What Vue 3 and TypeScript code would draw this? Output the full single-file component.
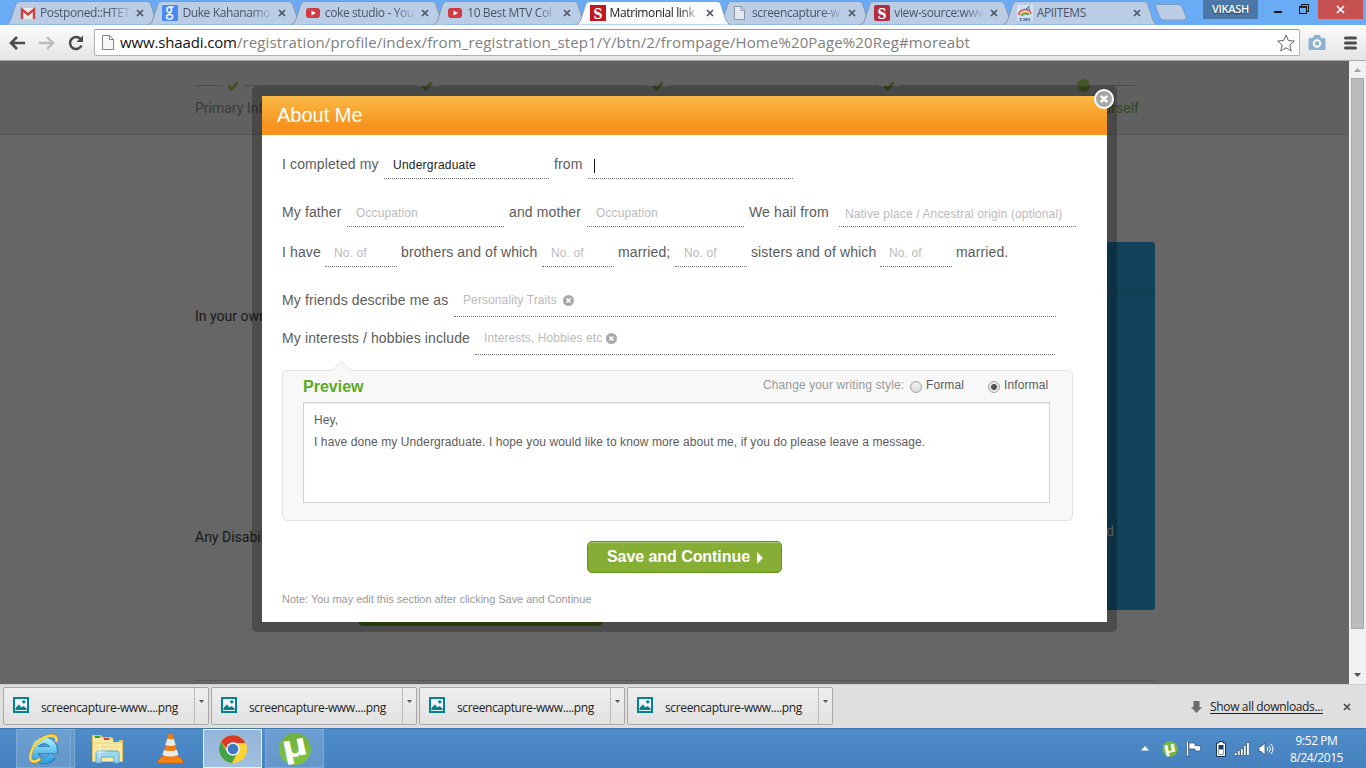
<script setup lang="ts">
interface Tab { icon: 'gmail' | 'google' | 'youtube' | 'shaadi' | 'doc' | 'apiit'; title: string; active?: boolean; fade?: boolean }
interface Piece { label: string; labelWidth: number; field?: number; gap?: number; text?: string; kind?: 'filled' | 'caret' | 'hint' | 'low' }

const tabs: Tab[] = [
  { icon: 'gmail', title: 'Postponed::HTET', fade: true },
  { icon: 'google', title: 'Duke Kahanamo', fade: true },
  { icon: 'youtube', title: 'coke studio - You', fade: true },
  { icon: 'youtube', title: '10 Best MTV Col', fade: true },
  { icon: 'shaadi', title: 'Matrimonial link', active: true, fade: true },
  { icon: 'doc', title: 'screencapture-w', fade: true },
  { icon: 'shaadi', title: 'view-source:www', fade: true },
  { icon: 'apiit', title: 'APIITEMS' },
]

const rows: Piece[][] = [
  [
    { label: 'I completed my', labelWidth: 102, field: 165, gap: 5, text: 'Undergraduate', kind: 'filled' },
    { label: 'from', labelWidth: 34, field: 205, text: '', kind: 'caret' },
  ],
  [
    { label: 'My father', labelWidth: 65, field: 157, gap: 5, text: 'Occupation', kind: 'hint' },
    { label: 'and mother', labelWidth: 78, field: 157, gap: 5, text: 'Occupation', kind: 'hint' },
    { label: 'We hail from', labelWidth: 90, field: 237, text: 'Native place / Ancestral origin (optional)', kind: 'low' },
  ],
  [
    { label: 'I have', labelWidth: 43, field: 72, gap: 4, text: 'No. of', kind: 'hint' },
    { label: 'brothers and of which', labelWidth: 141, field: 72, gap: 4, text: 'No. of', kind: 'hint' },
    { label: 'married;', labelWidth: 57, field: 72, gap: 4, text: 'No. of', kind: 'hint' },
    { label: 'sisters and of which', labelWidth: 129, field: 72, gap: 4, text: 'No. of', kind: 'hint' },
    { label: 'married.', labelWidth: 60 },
  ],
]

const tagRows = [
  { label: 'My friends describe me as', labelWidth: 172, field: 602, text: 'Personality Traits', gap: 6 },
  { label: 'My interests / hobbies include', labelWidth: 193, field: 580, text: 'Interests, Hobbies etc', gap: 4 },
]

const steps = [27, 172, 209, 209, 172]
const downloads = [1, 2, 3, 4]
</script>

<template>
  <div class="screen">
    <header class="tabstrip">
      <div class="tabs">
        <div v-for="(tab, i) in tabs" :key="i" class="tab" :class="{ active: tab.active }">
          <svg class="tab-shape" width="156" height="25" viewBox="0 0 156 25">
            <path d="M-1 24.5C2 24 3 22 4 19L8.500 5C9.500 2.300 11 1.500 14 1.500H139C142 1.500 143 2.300 144 5L148.500 19C150 22.500 151 24 154 24.500" />
          </svg>
          <span class="favicon">
            <svg v-if="tab.icon === 'gmail'" width="16" height="16"><path d="M1 3h14v11H1z" fill="#e9e9ee" /><path d="M2 14V4.500L8 9.500L14 4.500V14" fill="none" stroke="#c9423e" stroke-width="2.400" /></svg>
            <svg v-else-if="tab.icon === 'google'" width="16" height="16"><rect width="16" height="16" rx="1" fill="#4a8af4" /><g fill="none" stroke="#fff"><ellipse cx="7.300" cy="4.800" rx="2.300" ry="2.600" stroke-width="1.500" /><path d="M7.500 2h4M9 7q-2.500 1.500-.5 2.500" stroke-width="1.300" /><ellipse cx="7.600" cy="11.800" rx="3.100" ry="2.300" stroke-width="1.400" /></g></svg>
            <svg v-else-if="tab.icon === 'youtube'" width="16" height="16"><rect x="1" y="3" width="14" height="10" rx="3" fill="#cf3a44" /><path d="M6.500 5.500v5L11 8z" fill="#fff" /></svg>
            <svg v-else-if="tab.icon === 'shaadi'" width="16" height="16"><rect width="16" height="16" :rx="tab.active ? 0 : 2" :fill="tab.active ? '#c4161c' : '#b52c42'" /><text x="8" y="13.500" text-anchor="middle" font-family="DejaVu Serif, serif" font-weight="bold" font-size="15" textLength="9" lengthAdjust="spacingAndGlyphs" fill="#fff">S</text></svg>
            <svg v-else-if="tab.icon === 'doc'" width="16" height="16"><path d="M2.500 1.500h7l3 3.500v9.500h-10z" fill="#e3e9f2" stroke="#8b95a3" /><path d="M9 1.500V5.500h3.500" fill="none" stroke="#8b95a3" /></svg>
            <svg v-else width="16" height="16"><rect width="16" height="16" fill="#d3e2ef" /><path d="M2 10a6 5 0 0 1 12-1" fill="none" stroke="#db4a48" stroke-width="1.500" /><path d="M3.500 10.500a5 4 0 0 1 9-1" fill="none" stroke="#e7ae33" stroke-width="1.500" /><path d="M5 11a4 3 0 0 1 6.500-1.500" fill="none" stroke="#3c9757" stroke-width="1.500" /><path d="M9 4l4-3M11 2l2 3" stroke="#406a9a" /><text x="8" y="15.500" text-anchor="middle" font-family="Liberation Serif, serif" font-size="5" font-weight="bold" fill="#253f78">EMS</text></svg>
          </span>
          <span class="tab-title" :class="{ fade: tab.fade }">{{ tab.title }}</span>
          <svg class="tab-close" width="8" height="8" viewBox="0 0 8 8"><path d="M1 1l6 6M7 1L1 7" /></svg>
        </div>
      </div>
      <svg class="newtab" width="32" height="17"><path d="M1 .5h22q3 0 4 2.500l4 10q1 3-2 3H9q-3 0-4-2.500L.7 2.500Q.3.5 1 .5z" fill="#bacde5" stroke="#7d9fc6" /></svg>
      <div class="user">VIKASH</div>
      <div class="win-controls">
        <svg width="10" height="19"><path d="M1 12h8" stroke="#111" stroke-width="2" /></svg>
        <svg width="12" height="19"><path d="M1.500 6.500h7v7h-7zM3.500 6V4.500h7v7H9" fill="none" stroke="#111" /><path d="M1 7h8" stroke="#111" stroke-width="1.500" /></svg>
      </div>
      <div class="win-close"><svg width="9" height="9"><path d="M1 1l7 7M8 1L1 8" stroke="#fff" stroke-width="1.700" /></svg></div>
    </header>

    <nav class="toolbar">
      <svg class="back" width="16" height="14"><path d="M8 1L2 7l6 6M2 7h14" fill="none" stroke="#4a4a4a" stroke-width="2.600" /></svg>
      <svg class="forward" width="16" height="14"><path d="M8 1l6 6-6 6M14 7H0" fill="none" stroke="#bcbcbc" stroke-width="2.400" /></svg>
      <svg class="reload" width="16" height="16"><path d="M13.500 10.500A6 6 0 1 1 12.500 4" fill="none" stroke="#4a4a4a" stroke-width="2.500" /><path d="M15 .5V7H8.500z" fill="#4a4a4a" /></svg>
      <div class="omnibox">
        <svg class="page-icon" width="12" height="15"><path d="M.5.5h7l4 4v10H.5z" fill="#f7f7f7" stroke="#858585" /><path d="M7.500.5v4h4" fill="none" stroke="#858585" /></svg>
        <span class="url"><b>www.shaadi.com</b>/registration/profile/index/from_registration_step1/Y/btn/2/frompage/Home%20Page%20Reg#moreabt</span>
        <svg class="star" width="18" height="18"><path d="M9 1l2.400 5.500 6 .5-4.600 4 1.400 6L9 13.800 3.800 17l1.400-6L.6 7l6-.5z" fill="#fff" stroke="#666" /></svg>
      </div>
      <svg class="camera" width="18" height="16"><path d="M2 3h3l1-3h6l1 3h3q1.500 0 1.500 1.500v9q0 1.500-1.500 1.500H2Q.5 15 .5 13.500v-9Q.5 3 2 3z" fill="#8db2d4" /><circle cx="9" cy="8.500" r="3.200" fill="#8db2d4" stroke="#fff" stroke-width="2" /></svg>
      <svg class="menu" width="13" height="14"><path d="M1.500 2h10M1.500 7h10M1.500 12h10" stroke="#4d4d4d" stroke-width="3" stroke-linecap="round" /></svg>
    </nav>

    <main class="viewport">
      <div class="page">
        <div class="steps">
          <div class="track">
            <template v-for="(w, i) in steps" :key="i">
              <i class="bar" :style="{ width: w + 'px' }"></i>
              <svg v-if="i < 4" class="check" width="12" height="10"><path d="M1.500 5l3 3L10.500 1.500" fill="none" stroke="#3e5122" stroke-width="3" /></svg>
            </template>
            <i class="bar last"></i>
            <i class="dot"></i>
          </div>
          <div class="step-names"><span>Primary Info</span><span class="current">About Yourself</span></div>
        </div>
        <div class="side"><div class="side-head"></div><span>d</span></div>
        <p class="own">In your own words</p>
        <p class="disability">Any Disability</p>
        <div class="under-button"></div>
        <div class="rule"></div>

        <section class="modal">
          <h1>About Me</h1>
          <svg class="close" width="20" height="20"><circle cx="10" cy="10" r="9" fill="#a7a7a7" stroke="#fff" stroke-width="2" /><path d="M6.800 6.800l6.400 6.400M13.200 6.800l-6.400 6.400" stroke="#fff" stroke-width="2.600" /></svg>
          <div class="body">
            <div v-for="(row, r) in rows" :key="r" class="row">
              <template v-for="(p, i) in row" :key="i">
                <label :style="{ width: p.labelWidth + 'px' }">{{ p.label }}</label>
                <span v-if="p.field" class="field" :class="p.kind" :style="{ width: p.field + 'px', marginRight: (p.gap ?? 0) + 'px' }">{{ p.text }}<i v-if="p.kind === 'caret'"></i></span>
              </template>
            </div>
            <div v-for="t in tagRows" :key="t.label" class="row tags">
              <label :style="{ width: t.labelWidth + 'px' }">{{ t.label }}</label>
              <span class="field" :style="{ width: t.field + 'px', gap: t.gap + 'px' }">{{ t.text }}<svg width="11" height="11"><circle cx="5.500" cy="5.500" r="5.500" fill="#a9a9a9" /><path d="M3.500 3.500l4 4M7.500 3.500l-4 4" stroke="#fff" stroke-width="1.700" /></svg></span>
            </div>

            <div class="preview">
              <svg class="arrow" width="20" height="12"><path d="M0 11L9.500 1.500 19 11v1H0z" fill="#f8f8f8" /><path d="M.5 10.500l9-9 9 9" fill="none" stroke="#e4e4e4" /></svg>
              <div class="preview-head">
                <h2>Preview</h2>
                <span class="style-label">Change your writing style:</span>
                <i class="radio"></i><span class="formal">Formal</span>
                <i class="radio on"></i><span>Informal</span>
              </div>
              <div class="message">Hey,<br />I have done my Undergraduate. I hope you would like to know more about me, if you do please leave a message.</div>
            </div>
            <button class="save">Save and Continue<svg width="6" height="12"><path d="M0 0l6 6-6 6z" fill="#fff" /></svg></button>
            <p class="note">Note: You may edit this section after clicking Save and Continue</p>
          </div>
        </section>
      </div>
      <div class="scrollbar">
        <svg width="15" height="16"><path d="M4 11l3.500-4 3.500 4z" fill="#a0a0a0" /></svg>
        <div class="thumb"></div>
        <svg width="15" height="16"><path d="M4 5h7L7.500 9z" fill="#505050" /></svg>
      </div>
    </main>

    <section class="shelf">
      <div v-for="d in downloads" :key="d" class="download">
        <svg class="pic" width="16" height="16"><path d="M1 1h14v14H1z" fill="#f2f5f5" stroke="#00838f" stroke-width="2" /><path d="M2.500 13V11L6 7.500l2.500 3 2-1.500 3 2.500V13z" fill="#00838f" /><circle cx="10.800" cy="4.800" r="1.600" fill="#00838f" /></svg>
        <span>screencapture-www....png</span>
        <div class="drop"><svg width="5" height="3"><path d="M0 0h5L2.500 3z" fill="#555" /></svg></div>
      </div>
      <svg class="down-arrow" width="11" height="12"><path d="M2.500 0h6v6H11L5.500 12 0 6h2.500z" fill="#6c6c6c" /></svg>
      <a>Show all downloads...</a>
      <svg class="shelf-close" width="8" height="8"><path d="M1 1l6 6M7 1L1 7" stroke="#4d4d4d" stroke-width="1.700" /></svg>
    </section>

    <footer class="taskbar">
      <div class="task ie">
        <svg width="32" height="32" viewBox="0 0 30 32"><defs><linearGradient id="ie" x2="0" y2="1"><stop stop-color="#9becfd" /><stop offset="1" stop-color="#35a3e2" /></linearGradient></defs><path d="M6.500 17H25.500A10 10 0 1 0 24 23" fill="none" stroke="#2377b5" stroke-width="7" /><path d="M6.500 17H25A10 10 0 1 0 23.600 22.500" fill="none" stroke="url(#ie)" stroke-width="5.800" /><path d="M27 9C32-2 12 1 4 15c-6 12-1 18 8 11" fill="none" stroke="#b5902a" stroke-width="3" /><path d="M27 9C31-1 12 1 4 15c-6 12-1 17 7 11" fill="none" stroke="#ffd84a" stroke-width="2.300" /></svg>
      </div>
      <div class="ie-stack"></div>
      <svg class="folder" width="33" height="30"><path d="M1 1h9l2 2h9l2 3h9v22H1z" fill="#e3c460" /><path d="M2 3h8l2 2h9l2 3h8v19H2z" fill="#f8e9a4" /><path d="M4 2h5v2H4z" fill="#23a540" /><path d="M13 4h5v2h-5z" fill="#d84027" /><path d="M22 6h6v2h-6z" fill="#3799db" /><path d="M2 9h29M2 13h29" stroke="#ebd488" /><path d="M5 29V19q0-2 2-2h19q2 0 2 2v10h-5v-6H10v6z" fill="#9ed8ef" stroke="#5aa9cc" /><path d="M9 12v12M4 18h11" stroke="#fff" stroke-width="1" opacity=".7" /></svg>
      <svg class="vlc" width="27" height="31"><path d="M4 24h19l4 6H0z" fill="#f48a16" stroke="#ce650a" /><path d="M11.500 1h4l6.500 25q-8.500 4-17 0z" fill="#f07c12" /><path d="M10.200 6h6.600l1.900 6q-5 2-10.400 0zM7 17q6 2 13 0l1.400 5q-7.500 3-16 0z" fill="#e8e9e9" /></svg>
      <div class="task chrome">
        <svg width="30" height="30" viewBox="0 0 30 30"><circle cx="15" cy="15" r="14" fill="#ffd333" /><path d="M2.900 8A14 14 0 0 1 27.500 9H15a6 6 0 0 0-6 6z" fill="#db3928" /><path d="M2.900 8A14 14 0 0 0 14 29l6-11a6 6 0 0 1-10.500 0z" fill="#42a349" /><circle cx="15" cy="15" r="6.800" fill="#f6f6f6" /><circle cx="15" cy="15" r="5.300" fill="#3b79c8" /></svg>
      </div>
      <div class="task ut">
        <svg width="34" height="34"><defs><linearGradient id="ut" x2="0" y2="1"><stop stop-color="#6fae3d" /><stop offset="1" stop-color="#80c443" /></linearGradient></defs><circle cx="17" cy="17" r="16" fill="url(#ut)" /><text x="17" y="24.500" transform="rotate(-12 17 17)" text-anchor="middle" font-family="Liberation Sans, sans-serif" font-weight="bold" font-size="32" textLength="25" lengthAdjust="spacingAndGlyphs" fill="#fff">µ</text></svg>
      </div>
      <div class="tray">
        <svg class="up" width="8" height="5"><path d="M0 4.500L4 0l4 4.500z" fill="#fff" /></svg>
        <svg class="t-ut" width="16" height="16"><circle cx="8" cy="8" r="7.700" fill="#76b83f" /><text x="8" y="11.500" transform="rotate(-12 8 8)" text-anchor="middle" font-family="Liberation Sans, sans-serif" font-weight="bold" font-size="15" textLength="12" lengthAdjust="spacingAndGlyphs" fill="#fff">µ</text></svg>
        <svg class="flag" width="16" height="16"><path d="M1.500 1v14.500" stroke="#1b416e" stroke-width="3" /><path d="M1.500 1v14" stroke="#fff" stroke-width="1.600" /><path d="M3 2h6v2.500l6 .5-1 5H9V8H3z" fill="#fff" stroke="#234b7a" stroke-width=".7" /></svg>
        <svg class="battery" width="10" height="16"><path d="M3 .5h4v1.500h2.500v13.500H.5V2H3z" fill="#fff" stroke="#183350" /><path d="M2.500 4h5v9.500h-5z" fill="#1b3c61" /><path d="M3 8.500h4v4.500H3z" fill="#fff" /></svg>
        <svg class="signal" width="16" height="14"><g fill="#fff" stroke="#1d456f" stroke-width=".6"><path d="M.5 10.500h2.500v3h-2.500zM3.500 8.500h2.500v5h-2.500zM6.500 6.500h2.500v7h-2.500zM9.500 3.500h2.500v10h-2.500zM12.500.5h2.800v13h-2.800z" /></g></svg>
        <svg class="volume" width="16" height="14"><path d="M1 4.500h2L7 1v12L3 9.500H1z" fill="#fff" stroke="#1d456f" stroke-width=".7" /><path d="M9 5q1.500 2 0 4M11 3.500q3 3.500 0 7M13 2q4 5 0 10" fill="none" stroke="#fff" /></svg>
        <div class="clock"><span>9:52 PM</span><span>8/24/2015</span></div>
      </div>
    </footer>
  </div>
</template>

<style>
html, body { margin: 0; overflow: hidden; }
</style>

<style scoped>
.screen { width: 1366px; height: 768px; display: flex; flex-direction: column; overflow: hidden; font-family: "Liberation Sans", Arial, sans-serif; }
.screen * { box-sizing: border-box; }
svg { display: block; flex: none; }
i { font-style: normal; }
p, h1, h2 { margin: 0; }

.tabstrip { height: 25px; flex: none; display: flex; background: #6aabf5; }
.tabs { display: flex; margin-left: 7px; width: 1145px; flex: none; }
.tab { position: relative; width: 142.4px; height: 25px; flex: none; display: flex; align-items: center; padding-left: 13px; }
.tab-shape { position: absolute; left: 0; top: 0; overflow: visible; }
.tab-shape path { fill: #bacde5; stroke: #8398b2; }
.active { z-index: 2; }
.active .tab-shape path { fill: #fbfbfb; stroke: #8ea3bb; }
.favicon, .tab-title, .tab-close { position: relative; }
.tab-title { margin-left: 4px; width: 92px; height: 20px; white-space: nowrap; font: 12px/20px "Open Sans", "Noto Sans", sans-serif; letter-spacing: -.38px; color: #48556a; }
.tab-title.fade { -webkit-mask-image: linear-gradient(to right, #000 76%, transparent 100%); mask-image: linear-gradient(to right, #000 76%, transparent 100%); }
.active .tab-title { color: #222; }
.tab-close { margin-left: 4px; }
.tab-close path { stroke: #4c5664; stroke-width: 1.7; }
.newtab { margin: 4px 0 0 3px; }
.user { width: 55px; height: 19px; margin-left: 16px; background: #4d77a8; color: #fff; text-align: center; font: 600 11px/18px "Open Sans", sans-serif; letter-spacing: -.3px; text-shadow: 0 1px 1px #20374f; }
.win-controls { display: flex; width: 60px; gap: 15px; padding-left: 15px; }
.win-close { width: 45px; height: 19px; background: #c75050; display: flex; align-items: center; justify-content: center; }

.toolbar { height: 36px; flex: none; display: flex; align-items: center; background: linear-gradient(#fbfbfb, #e5e5e5); border-bottom: 1px solid #aaa; padding-left: 9px; }
.forward { margin-left: 14px; }
.reload { margin-left: 13px; }
.omnibox { margin-left: 10px; width: 1206px; height: 27px; border: 1px solid #b2b2b2; border-top-color: #999; border-radius: 2px; background: #fff; display: flex; align-items: center; padding-left: 7px; }
.url { margin: -2px 0 0 6px; width: 1157px; white-space: nowrap; color: #808080; font: 15px/22px "Open Sans", "Noto Sans", sans-serif; letter-spacing: .13px; }
.url b { font-weight: 400; color: #111; letter-spacing: -.14px; }
.camera { margin-left: 8px; }
.menu { margin-left: 18px; }

.viewport { height: 623px; flex: none; display: flex; }
.page { position: relative; width: 1349px; background: #666; overflow: hidden; }
.steps { height: 74px; background: #606060; border-bottom: 1px solid #555; padding: 19px 0 0 195px; }
.track { position: relative; height: 11px; width: 940px; display: flex; align-items: center; }
.bar { height: 1px; background: #45552a; flex: none; }
.check { margin: 0 5px; }
.bar.last { flex: 1; }
.dot { position: absolute; left: 882px; top: -1px; width: 13px; height: 13px; border-radius: 50%; background: #435624; }
.step-names { display: flex; justify-content: space-between; width: 944px; margin-top: 8px; font: 14px/19px Roboto, sans-serif; color: #393939; }
.current { color: #34481a; }
.side { position: absolute; left: 855px; top: 181px; width: 300px; height: 368px; border-radius: 3px; background: #114259; }
.side-head { height: 49px; border-bottom: 1px solid #10394c; }
.side span { display: block; text-align: right; padding-right: 41px; margin-top: 231px; font: 14px/18px Roboto, sans-serif; color: #777; }
.own, .disability { position: absolute; left: 195px; font: 14px/18px Roboto, sans-serif; color: #191919; }
.own { top: 246px; }
.disability { top: 467px; }
.under-button { position: absolute; left: 358px; top: 530px; width: 245px; height: 35px; border-radius: 5px; background: #344e10; }
.rule { position: absolute; left: 195px; top: 619px; width: 960px; height: 1px; background: #555; }

.modal { position: absolute; left: 252px; top: 25px; width: 865px; height: 546px; padding: 10px; border-radius: 5px; background: rgba(0, 0, 0, .25); }
h1 { height: 39px; padding-left: 15px; background: linear-gradient(#fbb946, #f7931e 78%); color: #fff; font-size: 20px; line-height: 38px; font-weight: 400; }
.close { position: absolute; left: 842px; top: 3px; }
.body { height: 487px; background: #fff; padding: 14px 20px 0; color: #5c5c5c; }
.row { display: flex; height: 30px; font-size: 14px; line-height: 30px; white-space: nowrap; letter-spacing: .12px; }
.row + .row { margin-top: 18px; }
.row:nth-child(3) { margin-top: 10px; }
label { flex: none; }
.field { flex: none; height: 30px; border-bottom: 1px dotted #777; font-size: 12px; padding-left: 9px; color: #bbb; letter-spacing: .1px; line-height: 32px; }
.field.filled { color: #222; letter-spacing: .22px; }
.field.caret { padding: 10px 0 0 6px; }
.field.caret i { display: block; width: 1px; height: 14px; background: #111; }
.field.low { padding-left: 6px; line-height: 34px; letter-spacing: .14px; }
.row.tags { height: 32px; margin-top: 6px; }
.row:nth-child(4) { margin-top: 18px; }
.tags .field { height: 32px; display: flex; line-height: 30px; }
.tags .field svg { margin-top: 10px; }
.preview { position: relative; width: 791px; height: 151px; margin-top: 15px; border: 1px solid #e2e2e2; border-radius: 5px; background: #f8f8f8; padding: 0 20px; }
.arrow { position: absolute; left: 49px; top: -11px; }
.preview-head { height: 31px; display: flex; align-items: flex-start; font-size: 12px; line-height: 28px; letter-spacing: .12px; }
h2 { font-size: 16px; line-height: 31px; color: #5aab1e; width: 460px; letter-spacing: 0; }
.style-label { color: #999; width: 147px; white-space: nowrap; }
.radio { width: 12px; height: 12px; margin: 10px 4px 0 0; border: 1px solid #a2a2a2; border-radius: 50%; background: linear-gradient(#eee, #ddd); flex: none; }
.radio.on { background: radial-gradient(circle, #555 0 2.6px, #e8e8e8 3.3px); }
.formal { width: 62px; }
.message { width: 747px; height: 101px; border: 1px solid #d2d2d2; padding: 6px 10px; background: #fff; font-size: 12px; line-height: 22px; letter-spacing: .095px; box-shadow: inset 0 1px 1px #eee; }
.save { display: flex; align-items: center; width: 195px; height: 32px; margin: 20px 0 0 305px; padding: 0 0 1px 19px; border: 1px solid #5f9418; border-radius: 5px; background: #86ae35; box-shadow: inset 0 1px #a9cb6b; color: #fff; font: bold 16px "Liberation Sans", Arial, sans-serif; letter-spacing: -.06px; white-space: nowrap; }
.save svg { margin: 2px 0 0 7px; }
.note { margin-top: 18px; font-size: 11px; line-height: 16px; letter-spacing: -.03px; color: #999; }

.scrollbar { width: 17px; padding-left: 1px; background: #f1f1f1; display: flex; flex-direction: column; }
.thumb { width: 13px; height: 551px; margin: 1px 0 39px 1px; border: 1px solid #a8a8a8; background: #bcbcbc; }

.shelf { height: 44px; flex: none; display: flex; align-items: center; padding-left: 3px; background: #dfdfdf; color: #222; font: 12px "Open Sans", sans-serif; border-top: 1px solid #d0d0d0; }
.download { width: 206px; height: 38px; margin: -1px 2px 0 0; flex: none; display: flex; align-items: center; border: 1px solid #a7a7a7; border-radius: 2px; background: linear-gradient(#efefef, #e1e1e1); padding-left: 9px; }
.download .pic { margin-bottom: 2px; }
.download > span { margin: 2px 0 0 12px; width: 153px; white-space: nowrap; letter-spacing: -.37px; }
.drop { height: 36px; border-left: 1px solid #bbb; padding: 12px 0 0 4px; }
.down-arrow { margin-left: 356px; }
.shelf a { margin-left: 8px; width: 114px; white-space: nowrap; text-decoration: underline; text-underline-offset: 2px; letter-spacing: -.34px; }
.shelf-close { margin-left: 19px; }

.taskbar { height: 40px; flex: none; display: flex; background: linear-gradient(#4f8cca, #4681be); padding-left: 16px; border-top: 1px solid #4176ad; }
.task { height: 39px; display: flex; align-items: center; justify-content: center; border: 1px solid #7eaad7; background: rgba(255, 255, 255, .17); }
.ie { width: 55px; }
.ie-stack { width: 4px; border: 1px solid #81acd8; border-left: 0; background: rgba(255, 255, 255, .13); }
.folder { margin: 5px 0 0 16px; }
.vlc { margin: 4px 0 0 33px; }
.chrome { width: 59px; margin-left: 19px; background: linear-gradient(#94b5d9, #9fc0e1); border-color: #e7f2fc; }
.chrome, .ut { flex: none; }
.ut { width: 59px; margin-left: 3px; }
.tray { margin-left: auto; display: flex; align-items: center; }
.t-ut { margin-left: 13px; }
.flag { margin-left: 8px; }
.battery { margin-left: 14px; }
.signal { margin-left: 8px; }
.volume { margin-left: 8px; }
.clock { width: 92px; display: flex; flex-direction: column; align-items: center; padding: 0 7px 0 0; color: #fff; font: 12px/17px "Open Sans", sans-serif; letter-spacing: -.42px; }
</style>
